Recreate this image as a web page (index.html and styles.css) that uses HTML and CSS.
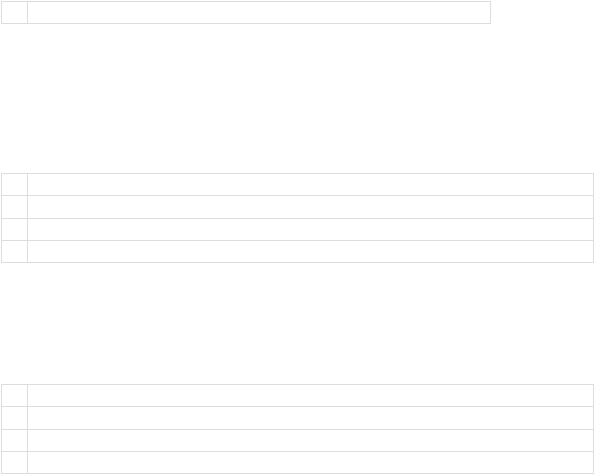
FILE: index.html
```html
<!DOCTYPE html>
<html>
<head>
<meta charset="utf-8">
<link rel="stylesheet" href="styles.css">
</head>
<body>
<div class="page">
  <table class="grid grid-narrow">
    <tr><td class="idx"></td><td class="val"></td></tr>
  </table>
  <table class="grid grid-wide grid-second">
    <tr><td class="idx"></td><td class="val"></td></tr>
    <tr><td class="idx"></td><td class="val"></td></tr>
    <tr><td class="idx"></td><td class="val"></td></tr>
    <tr><td class="idx"></td><td class="val"></td></tr>
  </table>
  <table class="grid grid-wide grid-third">
    <tr><td class="idx"></td><td class="val"></td></tr>
    <tr><td class="idx"></td><td class="val"></td></tr>
    <tr><td class="idx"></td><td class="val"></td></tr>
    <tr><td class="idx"></td><td class="val"></td></tr>
  </table>
</div>
</body>
</html>
```

FILE: styles.css
```css
html, body {
  margin: 0;
  padding: 0;
  background: #ffffff;
  font-family: "Liberation Sans", Arial, sans-serif;
  font-size: 13px;
}

.page {
  padding: 1px 0 0 1px;
}

.grid {
  border-collapse: collapse;
  table-layout: fixed;
}

.grid td {
  border: 1px solid #dddddd;
  height: 21.25px;
  padding: 0;
}

.grid .idx {
  width: 25px;
}

.grid-narrow {
  width: 490px;
}

.grid-wide {
  width: 593px;
}

.grid-second {
  margin-top: 148.75px;
}

.grid-third {
  margin-top: 121px;
}
```
